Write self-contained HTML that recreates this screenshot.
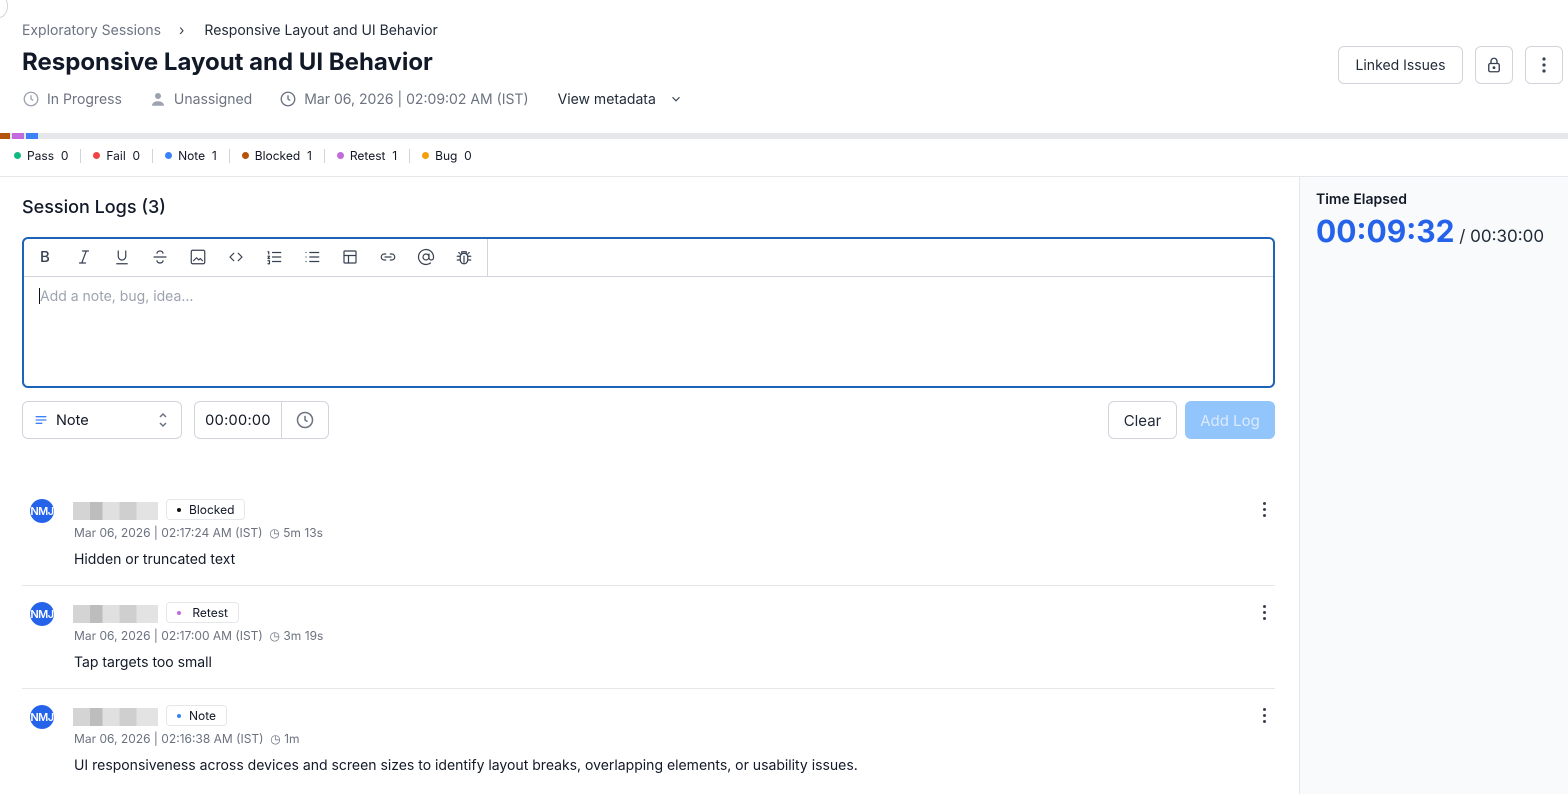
<!DOCTYPE html>
<html><head><meta charset="utf-8"><style>
*{box-sizing:border-box;margin:0;padding:0}
body{width:1568px;height:794px;overflow:hidden;background:#fff;font-family:"Inter","Liberation Sans",sans-serif;color:#111827;position:relative}
.abs{position:absolute}
.meta{color:#6b7280;font-size:14px;display:flex;align-items:center;gap:7px}
.btn{position:absolute;border:1px solid #d1d5db;border-radius:6px;background:#fff;display:flex;align-items:center;justify-content:center;font-size:14px;color:#1f2937}
.leg{display:flex;align-items:center;font-size:12px;color:#111827;}
.leg span.d{width:7px;height:7px;border-radius:50%;display:inline-block;margin-right:6px}
.leg .sep{width:1px;height:14px;background:#d1d5db;margin:0 12px}
.tb svg{position:absolute;top:248px;width:18px;height:18px;fill:none;stroke:#374151;stroke-width:1.6;stroke-linecap:round;stroke-linejoin:round}
.av{position:absolute;left:30px;width:24px;height:24px;border-radius:50%;background:#2563eb;color:#fff;font-size:11px;font-weight:600;display:flex;align-items:center;justify-content:center;overflow:hidden;letter-spacing:-0.5px}
.blur{position:absolute;left:73px;width:85px;height:18px;background:linear-gradient(90deg,#d4d4d4 0 20%,#bdbdbd 20% 35%,#e0e0e0 35% 55%,#cfcfcf 55% 75%,#e3e3e3 75%)}
.tag{position:absolute;left:166px;height:21px;border:1px solid #e5e7eb;border-radius:4px;font-size:12px;display:flex;align-items:center;padding:0 10px;gap:8px;color:#111827}
.tag i{width:4px;height:4px;border-radius:50%;display:inline-block}
.when{position:absolute;left:74px;font-size:12px;color:#6b7280}
.msg{position:absolute;left:74px;font-size:14px;color:#111827}
.kebab{position:absolute;left:1263px;width:4px}
.kebab b{display:block;width:3px;height:3px;background:#374151;border-radius:50%;margin-bottom:3px}
.hr{position:absolute;left:22px;width:1253px;height:1px;background:#e5e7eb}
</style></head><body>
<div class="abs" style="left:-10px;top:-6px;width:18px;height:24px;border:1px solid #d1d5db;border-radius:50%"></div>
<div class="abs" style="left:22px;top:22px;font-size:14px;color:#6b7280">Exploratory Sessions <span style="color:#374151;margin:0 20px 0 14px">›</span><span style="color:#1f2937">Responsive Layout and UI Behavior</span></div>
<div class="abs" style="left:22px;top:47px;font-size:24px;font-weight:700;color:#111827">Responsive Layout and UI Behavior</div>
<div class="abs meta" style="left:22px;top:90px">
<svg width="18" height="18" viewBox="0 0 24 24" fill="none" stroke="#9ca3af" stroke-width="1.8"><circle cx="12" cy="12" r="9"/><path d="M12 7v5l3 2"/></svg><span>In Progress</span>
<svg style="margin-left:20px" width="18" height="18" viewBox="0 0 24 24" fill="#9ca3af"><circle cx="12" cy="8" r="4"/><path d="M4 21c0-4 4-6 8-6s8 2 8 6z"/></svg><span>Unassigned</span>
<svg style="margin-left:20px" width="18" height="18" viewBox="0 0 24 24" fill="none" stroke="#6b7280" stroke-width="1.8"><circle cx="12" cy="12" r="9"/><path d="M12 7v5l3 2"/></svg><span>Mar 06, 2026 | 02:09:02 AM (IST)</span>
<span style="margin-left:22px;color:#1f2937">View metadata</span>
<svg style="margin-left:6px" width="14" height="14" viewBox="0 0 24 24" fill="none" stroke="#374151" stroke-width="2"><path d="M6 9l6 6 6-6"/></svg>
</div>
<div class="btn" style="left:1338px;top:46px;width:125px;height:38px">Linked Issues</div>
<div class="btn" style="left:1475px;top:46px;width:38px;height:38px"><svg width="18" height="18" viewBox="0 0 24 24" fill="none" stroke="#374151" stroke-width="1.8"><rect x="5" y="10" width="14" height="11" rx="2"/><path d="M8 10V7a4 4 0 0 1 8 0v3"/><circle cx="12" cy="15.5" r="1" fill="#374151"/></svg></div>
<div class="btn" style="left:1525px;top:46px;width:38px;height:38px"><svg width="4" height="16"><circle cx="2" cy="2" r="1.6" fill="#374151"/><circle cx="2" cy="8" r="1.6" fill="#374151"/><circle cx="2" cy="14" r="1.6" fill="#374151"/></svg></div>
<div class="abs" style="left:0;top:133px;width:1568px;height:6px;background:#e5e7eb"></div>
<div class="abs" style="left:0;top:133px;width:10px;height:6px;background:#b45309"></div>
<div class="abs" style="left:12px;top:133px;width:12px;height:6px;background:#c26bdc"></div>
<div class="abs" style="left:26px;top:133px;width:12px;height:6px;background:#3b82f6"></div>
<div class="abs leg" style="left:14px;top:148px">
<span class="d" style="background:#10b981"></span>Pass&nbsp; 0<span class="sep"></span>
<span class="d" style="background:#ef4444"></span>Fail&nbsp; 0<span class="sep"></span>
<span class="d" style="background:#3b82f6"></span>Note&nbsp; 1<span class="sep"></span>
<span class="d" style="background:#b45309"></span>Blocked&nbsp; 1<span class="sep"></span>
<span class="d" style="background:#c26bdc"></span>Retest&nbsp; 1<span class="sep"></span>
<span class="d" style="background:#f59e0b"></span>Bug&nbsp; 0</div>
<div class="abs" style="left:0;top:176px;width:1568px;height:1px;background:#e5e7eb"></div>
<div class="abs" style="left:1299px;top:177px;width:269px;height:617px;background:#f9fafb;border-left:1px solid #e5e7eb"></div>
<div class="abs" style="left:1316px;top:191px;font-size:14px;font-weight:600">Time Elapsed</div>
<div class="abs" style="left:1316px;top:214px;font-size:30px;font-weight:700;color:#2563eb">00:09:32<span style="font-size:17px;font-weight:400;color:#1f2937"> / 00:30:00</span></div>
<div class="abs" style="left:22px;top:197px;font-size:18px;font-weight:500">Session Logs (3)</div>
<div class="abs" style="left:22px;top:237px;width:1253px;height:151px;border:2px solid #1d63b8;border-radius:6px"></div>
<div class="abs" style="left:24px;top:276px;width:1249px;height:1px;background:#d1d5db"></div>
<div class="abs" style="left:487px;top:239px;width:1px;height:37px;background:#d1d5db"></div>
<div class="tb">
<div class="abs" style="left:40px;top:247px;font-size:15px;font-weight:500;color:#374151">B</div>
<svg style="left:75px" viewBox="0 0 24 24"><path d="M10 4h8M6 20h8M15 4L9 20"/></svg>
<svg style="left:113px" viewBox="0 0 24 24"><path d="M7 4v7a5 5 0 0 0 10 0V4M5 21h14"/></svg>
<svg style="left:151px" viewBox="0 0 24 24"><path d="M4 12h16M16 7a4 3 0 0 0-8 0M8 17a4 3 0 0 0 8 0"/></svg>
<svg style="left:189px" viewBox="0 0 24 24"><rect x="3" y="3" width="18" height="18" rx="2"/><path d="M6 17l4-4 3 3 2-2 3 3" /></svg>
<svg style="left:227px" viewBox="0 0 24 24"><path d="M9 7l-5 5 5 5M15 7l5 5-5 5"/></svg>
<svg style="left:265px" viewBox="0 0 24 24"><path d="M10 6h11M10 12h11M10 18h11M4 5h1v3M4 11h2l-2 3h2M4 17h2v4H4"/></svg>
<svg style="left:303px" viewBox="0 0 24 24"><path d="M9 6h12M9 12h12M9 18h12M4 6h.01M4 12h.01M4 18h.01"/></svg>
<svg style="left:341px" viewBox="0 0 24 24"><rect x="4" y="4" width="16" height="16" rx="1"/><path d="M4 10h16M10 10v10"/></svg>
<svg style="left:379px" viewBox="0 0 24 24"><path d="M9 8H7a4 4 0 0 0 0 8h2M15 8h2a4 4 0 0 1 0 8h-2M8 12h8"/></svg>
<svg style="left:417px" viewBox="0 0 24 24"><circle cx="12" cy="12" r="4"/><path d="M16 8v5a3 3 0 0 0 6 0v-1a10 10 0 1 0-4 8"/></svg>
<svg style="left:455px" viewBox="0 0 24 24"><rect x="7" y="7" width="10" height="14" rx="5"/><path d="M9 7V5h6v2M3 11h4M17 11h4M3 16h4M17 16h4M12 11v8M5 6l2 2M19 6l-2 2"/></svg>
</div>
<div class="abs" style="left:39px;top:288px;width:1px;height:16px;background:#111"></div>
<div class="abs" style="left:40px;top:288px;font-size:14px;color:#9ca3af">Add a note, bug, idea...</div>
<div class="btn" style="left:22px;top:401px;width:160px;height:38px;justify-content:flex-start;padding-left:10px">
<svg width="16" height="16" viewBox="0 0 24 24" fill="none" stroke="#3b82f6" stroke-width="2"><path d="M4 7h16M4 12h16M4 17h10"/></svg><span style="margin-left:7px;font-size:14.5px;color:#111827">Note</span>
<svg style="position:absolute;left:134px" width="12" height="18" viewBox="0 0 12 18" fill="none" stroke="#6b7280" stroke-width="1.5"><path d="M3 6l3-3 3 3M3 12l3 3 3-3"/></svg></div>
<div class="btn" style="left:194px;top:401px;width:135px;height:38px;justify-content:flex-start"><span style="width:86px;text-align:center;font-size:14.5px;color:#111827;letter-spacing:0.3px">00:00:00</span><span style="width:1px;height:36px;background:#d1d5db"></span><svg style="margin-left:13px" width="20" height="20" viewBox="0 0 24 24" fill="none" stroke="#6b7280" stroke-width="1.8"><circle cx="12" cy="12" r="9"/><path d="M12 7v5l3 2"/></svg></div>
<div class="btn" style="left:1108px;top:401px;width:69px;height:38px;font-size:15px">Clear</div>
<div class="abs" style="left:1185px;top:401px;width:90px;height:38px;border-radius:6px;background:#93c5fd;color:#dbeafe;font-size:15px;display:flex;align-items:center;justify-content:center">Add Log</div>

<div class="av" style="top:499px">NMJ</div><div class="blur" style="top:502px"></div>
<div class="tag" style="top:499px"><i style="background:#111"></i>Blocked</div>
<div class="when" style="top:525px">Mar 06, 2026 | 02:17:24 AM (IST) &nbsp;◷ 5m 13s</div>
<div class="msg" style="top:551px">Hidden or truncated text</div>
<div class="kebab" style="top:502px"><b></b><b></b><b></b></div>
<div class="hr" style="top:585px"></div>

<div class="av" style="top:602px">NMJ</div><div class="blur" style="top:605px"></div>
<div class="tag" style="top:602px"><i style="background:#c26bdc"></i>&nbsp;Retest</div>
<div class="when" style="top:628px">Mar 06, 2026 | 02:17:00 AM (IST) &nbsp;◷ 3m 19s</div>
<div class="msg" style="top:654px">Tap targets too small</div>
<div class="kebab" style="top:605px"><b></b><b></b><b></b></div>
<div class="hr" style="top:688px"></div>

<div class="av" style="top:705px">NMJ</div><div class="blur" style="top:708px"></div>
<div class="tag" style="top:705px"><i style="background:#3b82f6"></i>Note</div>
<div class="when" style="top:731px">Mar 06, 2026 | 02:16:38 AM (IST) &nbsp;◷ 1m</div>
<div class="msg" style="top:757px">UI responsiveness across devices and screen sizes to identify layout breaks, overlapping elements, or usability issues.</div>
<div class="kebab" style="top:708px"><b></b><b></b><b></b></div>
</body></html>
